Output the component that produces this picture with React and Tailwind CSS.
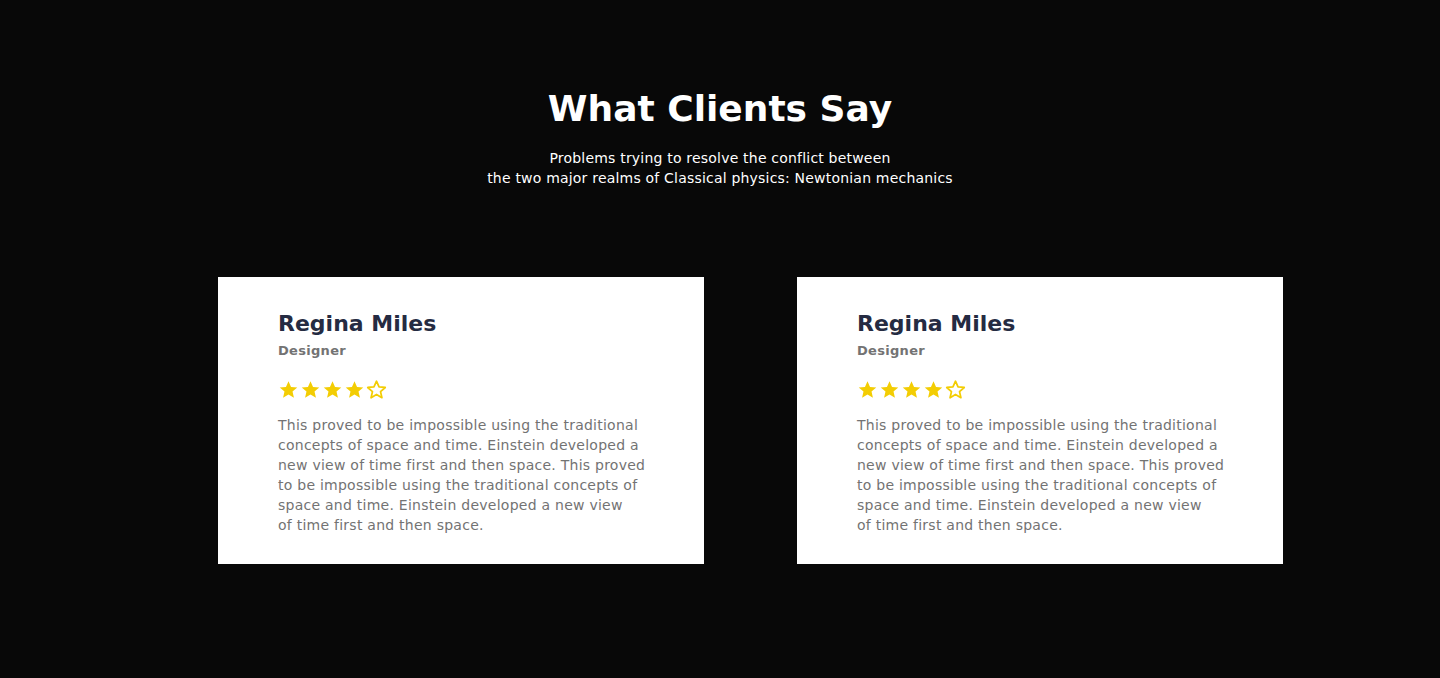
const stars = [true, true, true, true, false];

function Star({ filled }) {
  return (
    <svg width="21" height="21" viewBox="0 0 24 24" className="shrink-0">
      <path
        d="M12 2.5l2.9 6.6 7.1.6-5.4 4.7 1.6 7-6.2-3.7-6.2 3.7 1.6-7L2 9.7l7.1-.6z"
        fill={filled ? '#F3CD03' : 'none'}
        stroke="#F3CD03"
        strokeWidth={filled ? 0 : 2}
        strokeLinejoin="round"
      />
    </svg>
  );
}

function Card() {
  return (
    <div className="w-[486px] h-[287px] bg-white pl-[60px] pr-[52px] pt-[31px]">
      <h3 className="text-[22px] leading-[32px] font-bold text-[#252B42]">Regina Miles</h3>
      <p className="mt-[1px] text-[13px] leading-[20px] font-bold text-[#737373] tracking-[0.3px]">Designer</p>
      <div className="mt-[18px] flex gap-[1px]">
        {stars.map((f, i) => <Star key={i} filled={f} />)}
      </div>
      <p className="mt-[15px] text-[14px] leading-[20px] text-[#737373] tracking-[0.25px]">
        This proved to be impossible using the traditional<br />
        concepts of space and time. Einstein developed a<br />
        new view of time first and then space. This proved<br />
        to be impossible using the traditional concepts of<br />
        space and time. Einstein developed a new view<br />
        of time first and then space.
      </p>
    </div>
  );
}

export default function App() {
  return (
    <div className="min-h-[678px] bg-[#080808] font-['DejaVu_Sans',sans-serif] pt-[84px]">
      <div className="text-center">
        <h2 className="text-[36px] leading-[50px] font-bold text-white">What Clients Say</h2>
        <p className="mt-[14px] text-[14px] leading-[20px] text-white tracking-[0.2px]">
          Problems trying to resolve the conflict between<br />
          the two major realms of Classical physics: Newtonian mechanics
        </p>
      </div>
      <div className="mt-[89px] flex justify-center gap-[93px] pl-[61px]">
        <Card />
        <Card />
      </div>
    </div>
  );
}
